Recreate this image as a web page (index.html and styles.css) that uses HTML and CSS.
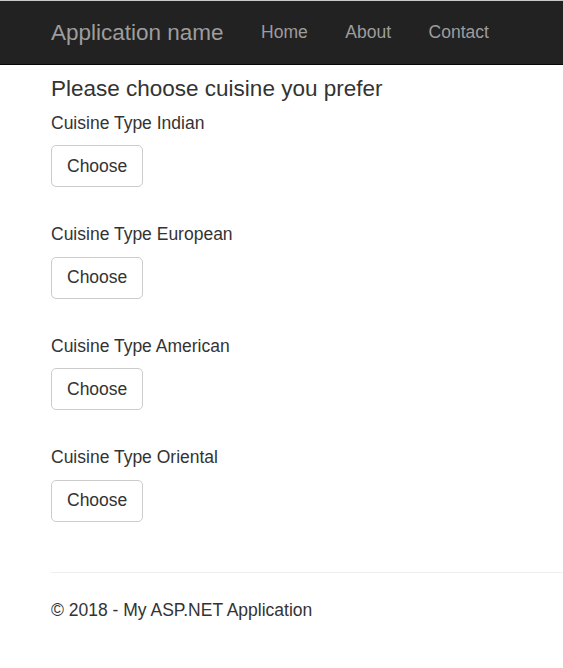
FILE: index.html
```html
<!DOCTYPE html>
<html>
<head>
<meta charset="utf-8">
<title>Cuisine</title>
<link rel="stylesheet" href="styles.css">
</head>
<body>
<nav class="navbar">
  <div class="navbar-inner">
    <a class="brand" href="#">Application name</a>
    <ul class="nav">
      <li><a href="#">Home</a></li>
      <li><a href="#">About</a></li>
      <li><a href="#">Contact</a></li>
    </ul>
  </div>
</nav>
<main class="content">
  <h4 class="title">Please choose cuisine you prefer</h4>
  <div class="groups">
    <div class="group">
      <p class="label">Cuisine Type Indian</p>
      <button class="btn">Choose</button>
    </div>
    <div class="group">
      <p class="label">Cuisine Type European</p>
      <button class="btn">Choose</button>
    </div>
    <div class="group">
      <p class="label">Cuisine Type American</p>
      <button class="btn">Choose</button>
    </div>
    <div class="group">
      <p class="label">Cuisine Type Oriental</p>
      <button class="btn">Choose</button>
    </div>
  </div>
  <hr class="rule">
  <footer class="footer">
    <p>© 2018 - My ASP.NET Application</p>
  </footer>
</main>
</body>
</html>
```

FILE: styles.css
```css
html, body {
  margin: 0;
  padding: 0;
  background: #fff;
}
body {
  font-family: "Liberation Sans", Arial, sans-serif;
  font-size: 17.5px;
  line-height: 25px;
  color: #333;
}
.navbar {
  background: #222;
  border-top: 1px solid #c9c9c9;
  border-bottom: 1px solid #080808;
  height: 63px;
  box-sizing: content-box;
}
.navbar-inner {
  display: flex;
  align-items: center;
  height: 100%;
  padding-left: 32.25px;
}
.brand {
  color: #9d9d9d;
  text-decoration: none;
  font-size: 22.5px;
  padding: 0 18.75px;
  line-height: 25px;
}
.nav {
  display: flex;
  list-style: none;
  margin: 0;
  padding: 0;
}
.nav a {
  display: block;
  color: #9d9d9d;
  text-decoration: none;
  padding: 0 18.75px;
  font-size: 17.5px;
  line-height: 25px;
}
.content {
  padding-left: 51px;
}
.title {
  margin: 10.6px 0 0;
  font-size: 22.5px;
  font-weight: normal;
  line-height: 25px;
}
.groups {
  display: flex;
  flex-direction: column;
  gap: 35px;
  margin-top: 10px;
}
.group {
  display: flex;
  flex-direction: column;
  align-items: flex-start;
}
.label {
  margin: 0 0 9.6px;
}
.btn {
  font-family: inherit;
  font-size: 17.5px;
  line-height: 25px;
  color: #333;
  background: #fff;
  border: 1px solid #ccc;
  border-radius: 5px;
  height: 42px;
  padding: 0 15px;
  box-sizing: border-box;
}
.rule {
  margin: 50.5px 0 0;
  border: 0;
  border-top: 1px solid #eee;
  height: 0;
}
.footer p {
  margin: 24.5px 0 0;
}
```
